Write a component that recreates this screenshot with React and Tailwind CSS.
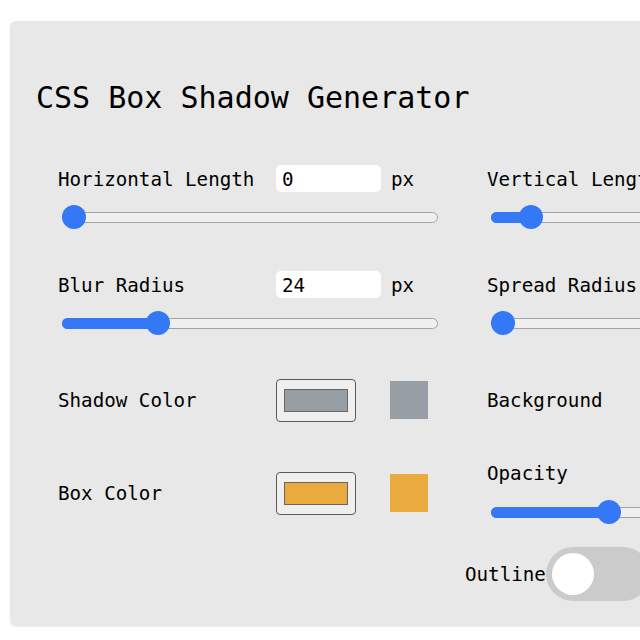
const font = { fontFamily: '"DejaVu Sans Mono", "Liberation Mono", monospace' };

const Slider = ({ pct }) => {
  const left = pct * 352;
  return (
    <div className="relative w-[376px] h-6 ml-[4px]">
      <div className="absolute left-0 right-0 top-[7px] h-[11px] rounded-full bg-[#efefef] border border-[#a3a3a3]" />
      {pct > 0 && (
        <div
          className="absolute left-0 top-[7px] h-[11px] rounded-full bg-[#3478f6]"
          style={{ width: left + 12 }}
        />
      )}
      <div
        className="absolute top-0 w-6 h-6 rounded-full bg-[#3478f6]"
        style={{ left }}
      />
    </div>
  );
};

const NumberRow = ({ label, value, pct }) => (
  <div className="flex flex-col gap-[13px]">
    <div className="flex items-center h-[27px]">
      <span className="w-[218px] pt-[3px]">{label}</span>
      <div className="w-[105px] h-[27px] bg-white rounded-[5px] pl-[6px] pt-[3px] flex items-center">{value}</div>
      <span className="ml-[10px] pt-[3px]">px</span>
    </div>
    <Slider pct={pct} />
  </div>
);

const ColorRow = ({ label, color }) => (
  <div className="flex items-center">
    <span className="w-[218px] pt-[3px]">{label}</span>
    <div className="w-[80px] h-[43px] rounded-[4px] border border-[#5a5a5a] bg-[#efefef] flex items-center justify-center">
      <div className="w-[64px] h-[23px] border border-[#666]" style={{ background: color }} />
    </div>
    <div className="w-[38px] h-[38px] ml-[34px]" style={{ background: color }} />
  </div>
);

export default function App() {
  return (
    <div className="w-[640px] h-[640px] overflow-hidden bg-white text-black" style={font}>
      <div className="pt-[21px] pl-[10px]">
        <div className="w-[1100px] h-[605px] bg-[#e8e8e8] rounded-md shadow-[0_1px_2px_rgba(0,0,0,0.08)] pt-[59px]">
          <h1 className="pl-[26px] h-9 leading-9 text-[30px] mb-[28px]">CSS Box Shadow Generator</h1>
          <div className="pl-[48px] text-[19.2px]">
            <div className="grid grid-cols-[380px_380px] gap-x-[49px] h-[106px] items-center">
              <NumberRow label="Horizontal Length" value="0" pct={0} />
              <NumberRow label="Vertical Length" value="8" pct={0.08} />
            </div>
            <div className="grid grid-cols-[380px_380px] gap-x-[49px] h-[106px] items-center">
              <NumberRow label="Blur Radius" value="24" pct={0.24} />
              <NumberRow label="Spread Radius" value="0" pct={0} />
            </div>
            <div className="grid grid-cols-[380px_380px] gap-x-[49px] h-[88px] items-center">
              <ColorRow label="Shadow Color" color="#989ea5" />
              <ColorRow label="Background" color="#ffffff" />
            </div>
            <div className="grid grid-cols-[380px_380px] gap-x-[49px] h-[98px] items-center">
              <ColorRow label="Box Color" color="#eaab3e" />
              <div className="flex flex-col gap-[14px]">
                <div className="h-6 leading-6">Opacity</div>
                <Slider pct={0.3} />
              </div>
            </div>
          </div>
          <div className="flex items-center h-[64px] pl-[455px] text-[19.2px]">
            <span className="pt-[2px]">Outline</span>
            <div className="w-[104px] h-[54px] rounded-full bg-[#cbcbcb] flex items-center pl-[6px]">
              <div className="w-[42px] h-[42px] rounded-full bg-white" />
            </div>
          </div>
        </div>
      </div>
    </div>
  );
}
